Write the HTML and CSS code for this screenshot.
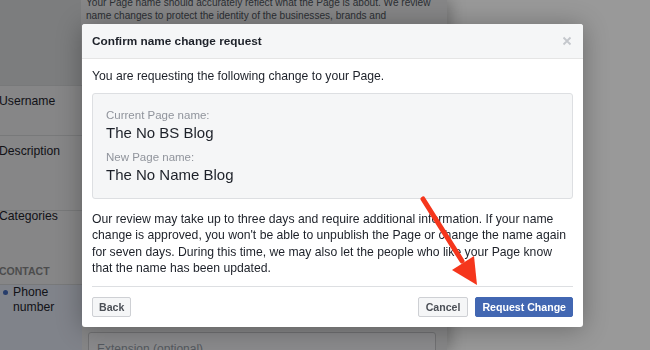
FILE: index.html
```html
<!DOCTYPE html>
<html lang="en">
<head>
    <meta charset="UTF-8">
    <title>Confirm name change request</title>
    <link rel="stylesheet" href="styles.css">
</head>
<body>
    <div id="page">
        <div id="settings">
            <div class="settingRow topRow">
                <div class="rowLabel"></div>
                <div class="rowField">
                    <p class="helpText">Your Page name should accurately reflect what the Page is about. We review<br>name changes to protect the identity of the businesses, brands and</p>
                </div>
            </div>
            <div class="settingRow usernameRow">
                <div class="rowLabel">Username</div>
                <div class="rowField"></div>
            </div>
            <div class="settingRow descriptionRow">
                <div class="rowLabel">Description</div>
                <div class="rowField"></div>
            </div>
            <div class="settingRow categoriesRow">
                <div class="rowLabel">Categories</div>
                <div class="rowField"></div>
            </div>
            <div class="sectionTitle">CONTACT</div>
            <div class="settingRow phoneRow">
                <div class="rowLabel"><span class="dot"></span><span>Phone<br>number</span></div>
                <div class="rowField">
                    <div class="fakeInput">Extension (optional)</div>
                </div>
            </div>
        </div>
        <div id="pageRest"></div>
    </div>

    <div id="dimmer"></div>

    <div id="modal">
        <div class="modalHeader">
            <span class="modalTitle">Confirm name change request</span>
            <svg class="closeIcon" width="10" height="10" viewBox="0 0 10 10">
                <path d="M1.5 1.5 L8.5 8.5 M8.5 1.5 L1.5 8.5" stroke="#c4c7cc" stroke-width="1.8" />
            </svg>
        </div>
        <div class="modalBody">
            <p class="introText">You are requesting the following change to your Page.</p>
            <div class="nameBox">
                <div class="nameLabel">Current Page name:</div>
                <div class="nameValue">The No BS Blog</div>
                <div class="nameLabel newLabel">New Page name:</div>
                <div class="nameValue">The No Name Blog</div>
            </div>
            <p class="reviewText">Our review may take up to three days and require additional information. If your name change is approved, you won't be able to unpublish the Page or change the name again for seven days. During this time, we may also let the people who like your Page know that the name has been updated.</p>
        </div>
        <div class="modalFooter">
            <button class="btn">Back</button>
            <div class="footerRight">
                <button class="btn btnCancel">Cancel</button>
                <button class="btn btnPrimary">Request Change</button>
            </div>
        </div>
    </div>

    <svg id="arrow" width="650" height="350" viewBox="0 0 650 350">
        <line x1="423" y1="199" x2="462" y2="261" stroke="#f5361c" stroke-width="5" stroke-linecap="round" />
        <polygon points="477,285 452,270 474,256" fill="#f5361c" />
    </svg>
</body>
</html>
```

FILE: styles.css
```css
body{
    margin: 0;
    padding: 0;
    width: 650px;
    height: 350px;
    overflow: hidden;
    font-family: 'Liberation Sans', Arial, sans-serif;
    color: #1d2129;
    background-color: #ffffff;
}

#page{
    display: flex;
    height: 350px;
}

#settings{
    width: 447px;
    background-color: #dfe0e2;
    display: flex;
    flex-direction: column;
    overflow: hidden;
    box-shadow: 4px 0 14px rgba(0, 0, 0, 0.25);
}

#pageRest{
    flex: 1;
}

.settingRow{
    display: flex;
    flex-shrink: 0;
    box-sizing: border-box;
}

.rowLabel{
    width: 82px;
    flex-shrink: 0;
    font-size: 12.2px;
    line-height: 16px;
    margin-left: -1px;
    padding-right: 1px;
    box-sizing: border-box;
}

.rowField{
    flex: 1;
}

.topRow{
    height: 85px;
}

.topRow .rowLabel{
    background-color: #cfd0d2;
}

.helpText{
    margin: -4px 0 0 5px;
    font-size: 10.1px;
    line-height: 13px;
    color: #4b4f56;
    white-space: nowrap;
}

.usernameRow,
.descriptionRow,
.categoriesRow{
    border-top: 1px solid #c9cacc;
}

.usernameRow{
    height: 50px;
}

.descriptionRow{
    height: 75px;
}

.categoriesRow{
    height: 50px;
}

.usernameRow .rowLabel,
.descriptionRow .rowLabel{
    padding-top: 7px;
}

.categoriesRow .rowLabel{
    margin-top: -3px;
}

.sectionTitle{
    height: 24px;
    flex-shrink: 0;
    font-size: 10.5px;
    font-weight: bold;
    color: #7f7f80;
    margin-left: -1px;
    padding-top: 5px;
    box-sizing: border-box;
}

.phoneRow{
    flex: 1;
    flex-shrink: 1;
    min-height: 0;
    border-top: 1px solid #c9cacc;
}

.phoneRow .rowLabel{
    display: flex;
    align-items: flex-start;
    margin-left: 0;
    padding-top: 0;
    line-height: 15px;
    background-color: #d5dbe6;
}

.dot{
    width: 5px;
    height: 5px;
    border-radius: 50%;
    background-color: #4267b2;
    margin: 5px 5px 0 3px;
    flex-shrink: 0;
}

.fakeInput{
    margin: 47px 11px 0 6px;
    height: 26px;
    border: 1px solid #bcbdc0;
    border-radius: 3px;
    background-color: #e6e7e9;
    color: #8d949e;
    font-size: 12px;
    padding: 9px 8px 0;
    box-sizing: border-box;
}

#dimmer{
    position: fixed;
    inset: 0;
    background-color: rgba(0, 0, 0, 0.4);
}

#modal{
    position: absolute;
    left: 82px;
    top: 24px;
    width: 501px;
    background-color: #ffffff;
    border-radius: 3px;
    box-shadow: 0 2px 26px rgba(0, 0, 0, 0.3);
    overflow: hidden;
}

.modalHeader{
    height: 34px;
    background-color: #f5f6f7;
    border-bottom: 1px solid #e5e5e5;
    display: flex;
    align-items: center;
    justify-content: space-between;
    padding: 0 11px 0 10px;
}

.modalTitle{
    font-size: 11.8px;
    font-weight: bold;
    color: #1d2129;
}

.modalBody{
    padding: 9px 10px 0;
}

.introText{
    margin: 0;
    font-size: 12.2px;
    line-height: 16px;
}

.nameBox{
    margin-top: 9px;
    background-color: #f5f6f7;
    border: 1px solid #dddfe2;
    border-radius: 3px;
    padding: 13px 13px 13px;
}

.nameLabel{
    font-size: 11.5px;
    line-height: 16px;
    color: #90949c;
}

.newLabel{
    margin-top: 6px;
}

.nameValue{
    font-size: 15px;
    line-height: 20px;
    color: #1d2129;
}

.reviewText{
    margin: 12px 0 0;
    font-size: 12.2px;
    line-height: 16.4px;
    padding-bottom: 9px;
    border-bottom: 1px solid #dddfe2;
}

.modalFooter{
    display: flex;
    justify-content: space-between;
    padding: 10px;
}

.footerRight{
    display: flex;
    gap: 7px;
}

.btn{
    height: 20px;
    padding: 0 6px;
    font-family: 'Liberation Sans', Arial, sans-serif;
    font-size: 10.6px;
    font-weight: bold;
    color: #4b4f56;
    background-color: #f5f6f7;
    border: 1px solid #ced0d4;
    border-radius: 2px;
}

.btnCancel{
    padding: 0 7px;
}

.btnPrimary{
    color: #ffffff;
    background-color: #4267b2;
    border-color: #4267b2;
    padding: 0 6px;
}

#arrow{
    position: absolute;
    left: 0;
    top: 0;
    pointer-events: none;
}
```
